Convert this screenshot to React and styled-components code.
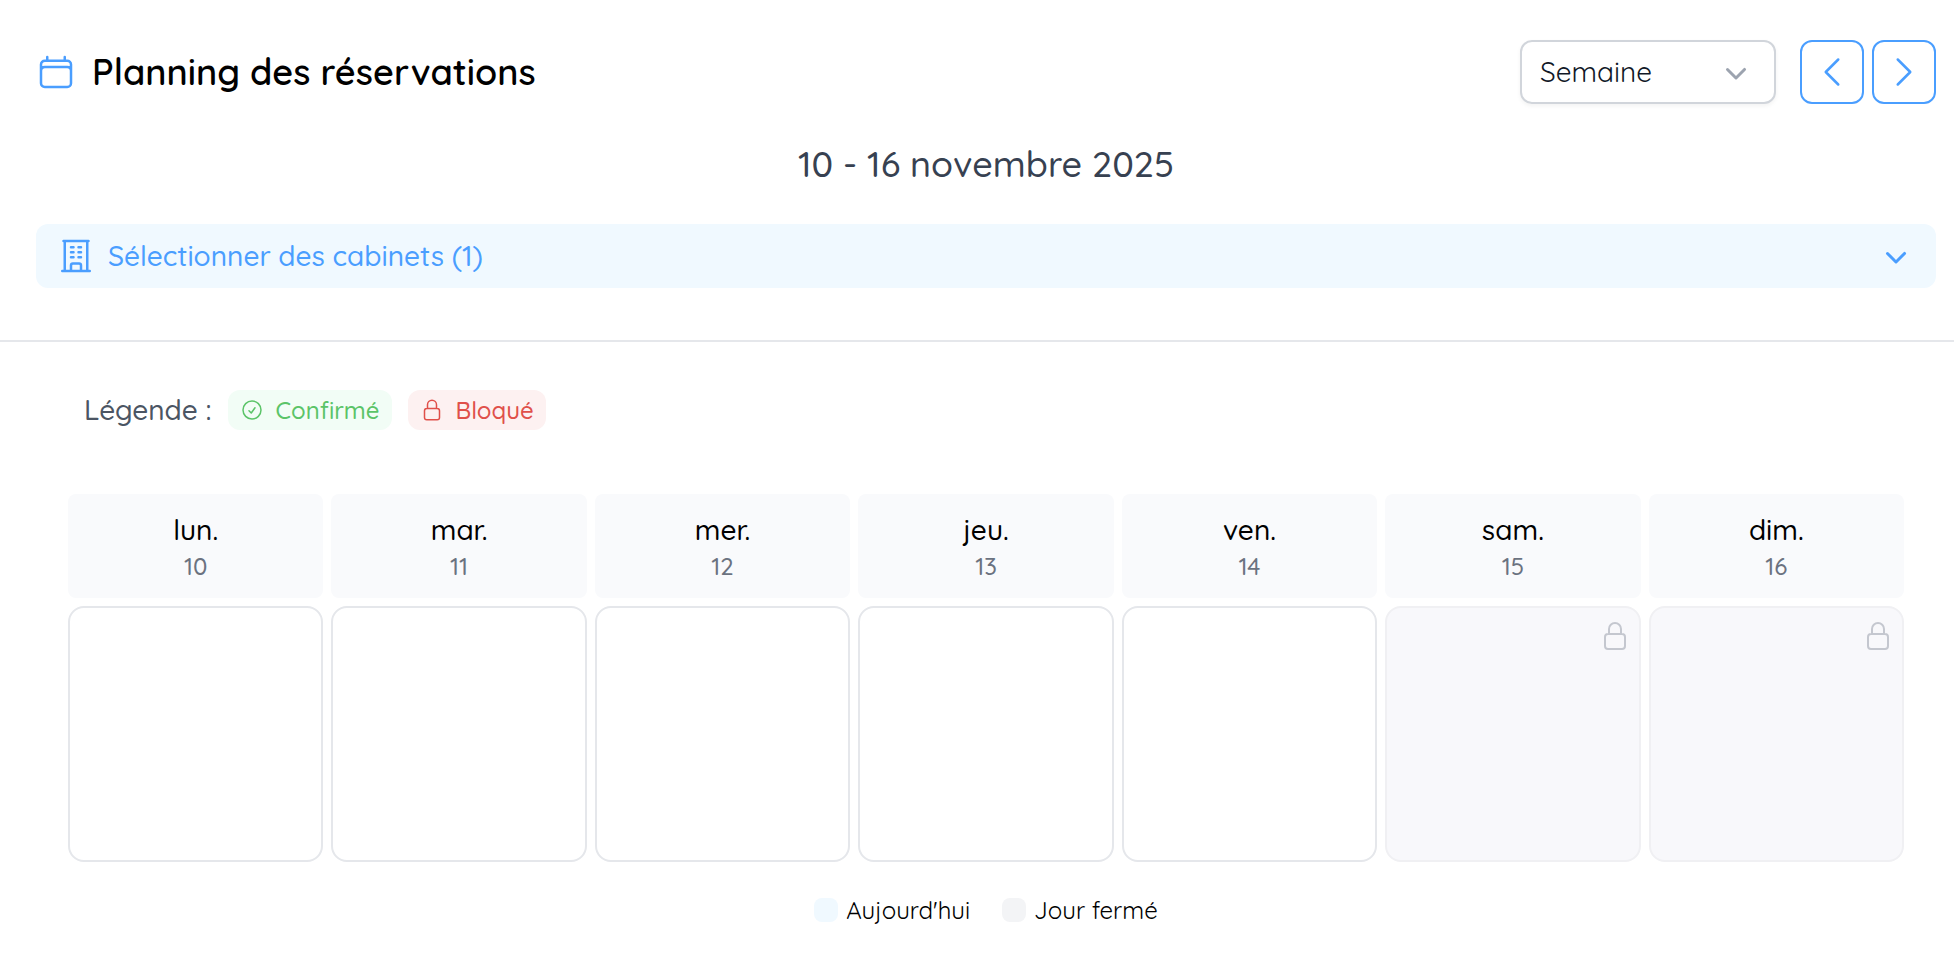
import { useState } from "react";
import styled, { createGlobalStyle } from "styled-components";

const DAYS = [
  { name: "lun.", date: 10 },
  { name: "mar.", date: 11 },
  { name: "mer.", date: 12 },
  { name: "jeu.", date: 13 },
  { name: "ven.", date: 14 },
  { name: "sam.", date: 15, closed: true },
  { name: "dim.", date: 16, closed: true },
];

const ICONS = {
  calendar:
    "M6.75 3v2.25M17.25 3v2.25M3 18.75V7.5a2.25 2.25 0 0 1 2.25-2.25h13.5A2.25 2.25 0 0 1 21 7.5v11.25m-18 0A2.25 2.25 0 0 0 5.25 21h13.5A2.25 2.25 0 0 0 21 18.75m-18 0v-7.5A2.25 2.25 0 0 1 5.25 9h13.5A2.25 2.25 0 0 1 21 11.25v7.5",
  building:
    "M3.75 21h16.5M4.5 3h15M5.25 3v18m13.5-18v18M9 6.75h1.5m-1.5 3h1.5m-1.5 3h1.5m3-6H15m-1.5 3H15m-1.5 3H15M9 21v-3.375c0-.621.504-1.125 1.125-1.125h3.75c.621 0 1.125.504 1.125 1.125V21",
  lock: "M16.5 10.5V6.75a4.5 4.5 0 1 0-9 0v3.75m-.75 11.25h10.5a2.25 2.25 0 0 0 2.25-2.25v-6.75a2.25 2.25 0 0 0-2.25-2.25H6.75a2.25 2.25 0 0 0-2.25 2.25v6.75a2.25 2.25 0 0 0 2.25 2.25Z",
  check: "M9 12.75 11.25 15 15 9.75M21 12a9 9 0 1 1-18 0 9 9 0 0 1 18 0Z",
  left: "M15.75 19.5 8.25 12l7.5-7.5",
  right: "m8.25 4.5 7.5 7.5-7.5 7.5",
};

function Icon({ name, size = 40 }) {
  return (
    <Svg
      width={size}
      height={size}
      viewBox="0 0 24 24"
      fill="none"
      stroke="currentColor"
      strokeWidth="1.5"
      strokeLinecap="round"
      strokeLinejoin="round"
      aria-hidden="true"
    >
      <path d={ICONS[name]} />
    </Svg>
  );
}

function ChevronDown() {
  return (
    <Svg
      width="40"
      height="40"
      viewBox="0 0 20 20"
      fill="currentColor"
      aria-hidden="true"
    >
      <path d="M5.22 8.22a.75.75 0 0 1 1.06 0L10 11.94l3.72-3.72a.75.75 0 1 1 1.06 1.06l-4.25 4.25a.75.75 0 0 1-1.06 0L5.22 9.28a.75.75 0 0 1 0-1.06Z" />
    </Svg>
  );
}

export default function App() {
  const [view, setView] = useState("week");

  return (
    <>
      <GlobalStyle />
      <Header>
        <TopBar>
          <Title>
            <Icon name="calendar" />
            <h1>Planning des réservations</h1>
          </Title>
          <Controls>
            <SelectWrapper>
              <select
                aria-label="Affichage"
                value={view}
                onChange={(event) => setView(event.target.value)}
              >
                <option value="day">Jour</option>
                <option value="week">Semaine</option>
                <option value="month">Mois</option>
              </select>
              <ChevronDown />
            </SelectWrapper>
            <NavButtons>
              <NavButton type="button" aria-label="Semaine précédente">
                <Icon name="left" />
              </NavButton>
              <NavButton type="button" aria-label="Semaine suivante">
                <Icon name="right" />
              </NavButton>
            </NavButtons>
          </Controls>
        </TopBar>
        <Period>10 - 16 novembre 2025</Period>
        <OfficeToggle type="button" aria-expanded="false">
          <Icon name="building" />
          <span>Sélectionner des cabinets (1)</span>
          <ChevronDown />
        </OfficeToggle>
      </Header>

      <Planning>
        <Legend>
          <span>Légende :</span>
          <Badge $color="#5bc468" $background="#f2fdf6">
            <Icon name="check" size={24} />
            Confirmé
          </Badge>
          <Badge $color="#e0504a" $background="#fdf1f1">
            <Icon name="lock" size={24} />
            Bloqué
          </Badge>
        </Legend>

        <Week>
          {DAYS.map((day) => (
            <DayHeader key={day.date}>
              <DayName>{day.name}</DayName>
              <DayNumber>{day.date}</DayNumber>
            </DayHeader>
          ))}
          {DAYS.map((day) => (
            <DayCell key={day.date} $closed={day.closed}>
              {day.closed && <Icon name="lock" size={32} />}
            </DayCell>
          ))}
        </Week>

        <Key>
          <KeyItem>
            <Swatch $color="#f0f9ff" />
            Aujourd'hui
          </KeyItem>
          <KeyItem>
            <Swatch $color="#f3f4f6" />
            Jour fermé
          </KeyItem>
        </Key>
      </Planning>
    </>
  );
}

const GlobalStyle = createGlobalStyle`
  *, *::before, *::after {
    box-sizing: border-box;
  }
  body {
    margin: 0;
    background: #fff;
    color: #000;
    font-family: Quicksand, Lato, sans-serif;
    font-size: 28px;
    line-height: 40px;
  }
  button, select {
    font: inherit;
    cursor: pointer;
  }
  h1, h2 {
    margin: 0;
  }
`;

const Svg = styled.svg`
  display: block;
  flex-shrink: 0;
`;

const Header = styled.header`
  padding: 40px 18px 52px 36px;
  border-bottom: 2px solid #e5e7eb;
`;

const TopBar = styled.div`
  display: flex;
  align-items: center;
  justify-content: space-between;
`;

const Title = styled.div`
  display: flex;
  align-items: center;
  gap: 16px;
  color: #4a9eff;
  h1 {
    color: #000;
    font-size: 36px;
    line-height: 56px;
    font-weight: 600;
  }
`;

const Controls = styled.div`
  display: flex;
  gap: 24px;
`;

const SelectWrapper = styled.div`
  display: grid;
  align-items: center;
  width: 256px;
  color: #9ca3af;
  select,
  svg {
    grid-area: 1 / 1;
  }
  select {
    width: 100%;
    height: 64px;
    padding: 0 60px 0 18px;
    appearance: none;
    border: 2px solid #d1d5db;
    border-radius: 12px;
    background: #fff;
    color: #111827;
    box-shadow: 0 2px 4px rgba(0, 0, 0, 0.05);
  }
  svg {
    justify-self: end;
    margin-right: 20px;
    pointer-events: none;
  }
`;

const NavButtons = styled.div`
  display: flex;
  gap: 8px;
`;

const NavButton = styled.button`
  display: grid;
  place-items: center;
  width: 64px;
  height: 64px;
  padding: 0;
  border: 2px solid #4a9eff;
  border-radius: 12px;
  background: #fff;
  color: #4a9eff;
`;

const Period = styled.h2`
  margin: 32px 0;
  color: #374151;
  font-size: 36px;
  line-height: 56px;
  font-weight: 500;
  text-align: center;
`;

const OfficeToggle = styled.button`
  display: flex;
  align-items: center;
  gap: 12px;
  width: 100%;
  height: 64px;
  padding: 0 20px;
  border: 0;
  border-radius: 12px;
  background: #f0f9ff;
  color: #4a9eff;
  font-weight: 500;
  span {
    flex: 1;
    text-align: left;
  }
`;

const Planning = styled.main`
  padding: 48px 50px 36px 68px;
`;

const Legend = styled.div`
  display: flex;
  align-items: center;
  gap: 16px;
  margin-bottom: 64px;
  padding-left: 16px;
  color: #4b5563;
  font-weight: 500;
`;

const Badge = styled.span`
  display: flex;
  align-items: center;
  gap: 12px;
  padding: 0 12px;
  border-radius: 12px;
  background: ${({ $background }) => $background};
  color: ${({ $color }) => $color};
  font-size: 24px;
`;

const Week = styled.section`
  display: grid;
  grid-template-columns: repeat(7, 1fr);
  gap: 8px;
`;

const DayHeader = styled.div`
  padding: 16px;
  border-radius: 8px;
  background: #f9fafc;
  font-weight: 500;
  text-align: center;
`;

const DayName = styled.div`
  line-height: 40px;
`;

const DayNumber = styled.div`
  color: #6b7280;
  font-size: 24px;
  line-height: 32px;
`;

const DayCell = styled.div`
  display: flex;
  justify-content: flex-end;
  min-height: 256px;
  padding: 12px 8px;
  border: 2px solid ${({ $closed }) => ($closed ? "#f0f0f3" : "#e5e7eb")};
  border-radius: 16px;
  background: ${({ $closed }) => ($closed ? "#f8f8fb" : "#fff")};
  color: #c4c7cf;
`;

const Key = styled.div`
  display: flex;
  justify-content: center;
  gap: 32px;
  margin-top: 32px;
  font-size: 24px;
  line-height: 32px;
`;

const KeyItem = styled.div`
  display: flex;
  align-items: center;
  gap: 8px;
`;

const Swatch = styled.span`
  width: 24px;
  height: 24px;
  border-radius: 8px;
  background: ${({ $color }) => $color};
`;
